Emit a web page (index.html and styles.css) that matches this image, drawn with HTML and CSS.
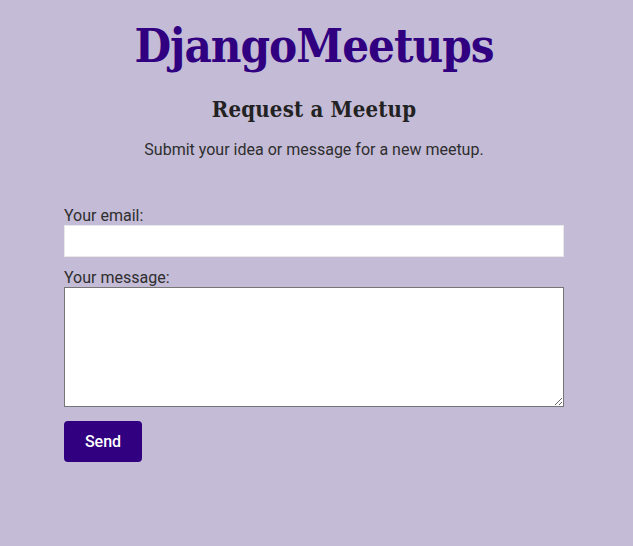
FILE: index.html
```html
<!DOCTYPE html>
<html lang="en">
<head>
<meta charset="utf-8">
<title>DjangoMeetups</title>
<link rel="stylesheet" href="styles.css">
</head>
<body>
<header class="site-header">
  <h1 class="brand">DjangoMeetups</h1>
</header>
<main class="page">
  <section class="intro">
    <h2 class="intro-title">Request a Meetup</h2>
    <p class="intro-text">Submit your idea or message for a new meetup.</p>
  </section>
  <form class="request-form">
    <div class="field">
      <label class="field-label" for="email">Your email:</label>
      <input class="field-input" type="email" id="email" name="email">
    </div>
    <div class="field">
      <label class="field-label" for="message">Your message:</label>
      <textarea class="field-textarea" id="message" name="message"></textarea>
    </div>
    <button class="send-btn" type="submit">Send</button>
  </form>
</main>
</body>
</html>
```

FILE: styles.css
```css
html, body {
  margin: 0;
  padding: 0;
}
body {
  background: #c4bbd6;
  font-family: Roboto, "Liberation Sans", sans-serif;
  color: #2b2b2b;
  padding-right: 5px;
  min-height: 546px;
}
.site-header {
  text-align: center;
  padding-top: 14px;
}
.brand {
  margin: 0;
  font-family: "DejaVu Serif Condensed", "DejaVu Serif", serif;
  font-weight: bold;
  font-size: 47px;
  letter-spacing: -1px;
  line-height: 64px;
  color: #310080;
}
.page {
  width: 500px;
  margin: 0 auto;
}
.intro {
  text-align: center;
}
.intro-title {
  margin: 16px 0 0;
  font-family: "DejaVu Serif Condensed", "DejaVu Serif", serif;
  font-weight: bold;
  font-size: 22px;
  letter-spacing: 0.2px;
  line-height: 30px;
  color: #222;
}
.intro-text {
  margin: 16px 0 0;
  font-size: 16px;
  line-height: 20px;
  color: #2e2e2e;
}
.request-form {
  margin-top: 47px;
  display: flex;
  flex-direction: column;
}
.field {
  display: flex;
  flex-direction: column;
  margin-bottom: 12px;
}
.field-label {
  font-size: 16px;
  line-height: 18px;
  color: #2e2e2e;
}
.field-input {
  box-sizing: border-box;
  width: 500px;
  height: 32px;
  margin: 0;
  border: 1px solid #e8e8e8;
  background: #fff;
  font: inherit;
  padding: 4px 6px;
}
.field-textarea {
  box-sizing: border-box;
  width: 500px;
  height: 120px;
  margin: 0;
  border: 1px solid #767676;
  background: #fff;
  font: inherit;
  padding: 4px 6px;
}
.send-btn {
  align-self: flex-start;
  width: 78px;
  height: 41px;
  margin-top: 2px;
  border: none;
  border-radius: 4px;
  background: #310080;
  color: #fff;
  font-family: Roboto, "Liberation Sans", sans-serif;
  font-weight: 500;
  font-size: 16px;
  cursor: pointer;
}
```
